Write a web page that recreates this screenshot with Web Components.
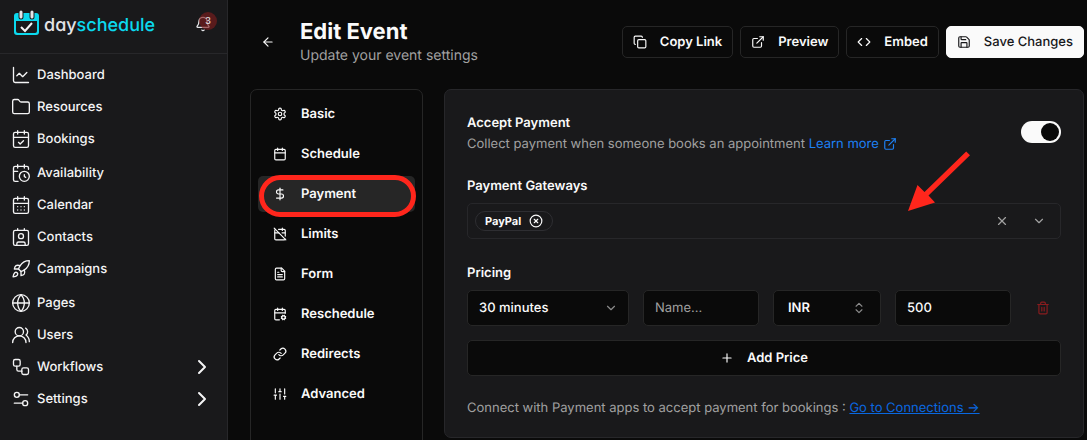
<!DOCTYPE html>
<html lang="en">
<head>
<meta charset="utf-8">
<meta name="viewport" content="width=device-width, initial-scale=1">
<title>Edit Event - dayschedule</title>
<style>
  html, body { margin: 0; height: 100%; background: #0a0a0a; }
  body { font: 500 13px/20px Inter, "Liberation Sans", sans-serif; color: #fafafa; overflow: hidden; text-rendering: geometricPrecision; }
</style>
</head>
<body>
<ds-app>
  <ds-sidebar slot="sidebar"></ds-sidebar>
  <ds-header heading="Edit Event" summary="Update your event settings">
    <ds-button icon="copy">Copy Link</ds-button>
    <ds-button icon="external">Preview</ds-button>
    <ds-button icon="code">Embed</ds-button>
    <ds-button icon="save" primary>Save Changes</ds-button>
  </ds-header>
  <ds-tabs slot="tabs">
    <ds-tab icon="gear">Basic</ds-tab>
    <ds-tab icon="calendar">Schedule</ds-tab>
    <ds-tab icon="dollar" active>Payment</ds-tab>
    <ds-tab icon="calendar-off">Limits</ds-tab>
    <ds-tab icon="file">Form</ds-tab>
    <ds-tab icon="calendar-cog">Reschedule</ds-tab>
    <ds-tab icon="link">Redirects</ds-tab>
    <ds-tab icon="sliders">Advanced</ds-tab>
  </ds-tabs>
  <ds-panel slot="panel">
    <ds-switch label="Accept Payment">Collect payment when someone books an appointment</ds-switch>
    <ds-gateways></ds-gateways>
    <ds-pricing></ds-pricing>
    <ds-note>Connect with Payment apps to accept payment for bookings :</ds-note>
  </ds-panel>
</ds-app>

<script>
const define = (name, markup, after) => {
  const template = document.createElement('template');
  template.innerHTML = markup;
  customElements.define(name, class extends HTMLElement {
    constructor() {
      super();
      this.attachShadow({ mode: 'open' }).append(template.content.cloneNode(true));
    }
    connectedCallback() { if (after) after.call(this, this.shadowRoot); }
  });
};

const p = (...d) => d.map(x => `<path d="${x}"/>`).join('');
const calendar = '<rect x="3" y="4" width="18" height="18" rx="2"/>' + p('M16 2v4M8 2v4M3 10h18');
const ICONS = {
  chart: p('M3 3v16a2 2 0 0 0 2 2h16', 'm19 9-5 5-4-4-3 3'),
  folder: p('M20 20a2 2 0 0 0 2-2V8a2 2 0 0 0-2-2h-7.9a2 2 0 0 1-1.69-.9L9.6 3.9A2 2 0 0 0 7.93 3H4a2 2 0 0 0-2 2v13a2 2 0 0 0 2 2Z'),
  calendar,
  'calendar-check': calendar + p('m9 16 2 2 4-4'),
  'calendar-clock': p('M21 7.5V6a2 2 0 0 0-2-2H5a2 2 0 0 0-2 2v14a2 2 0 0 0 2 2h3.5', 'M16 2v4M8 2v4M3 10h5', 'M16 14v2.2l1.6 1') + '<circle cx="16" cy="16" r="6"/>',
  'calendar-days': calendar + p('M8 14h.01M12 14h.01M16 14h.01M8 18h.01M12 18h.01M16 18h.01'),
  contact: '<rect x="3" y="4" width="18" height="18" rx="2"/><circle cx="12" cy="11" r="3"/>' + p('M16 2v2M8 2v2', 'M7 22v-2a2 2 0 0 1 2-2h6a2 2 0 0 1 2 2v2'),
  rocket: p('M4.5 16.5c-1.5 1.26-2 5-2 5s3.74-.5 5-2c.71-.84.7-2.13-.09-2.91a2.18 2.18 0 0 0-2.91-.09z', 'm12 15-3-3a22 22 0 0 1 2-3.95A12.88 12.88 0 0 1 22 2c0 2.72-.78 7.5-6 11a22.35 22.35 0 0 1-4 2z', 'M9 12H4s.55-3.03 2-4c1.62-1.08 5 0 5 0', 'M12 15v5s3.03-.55 4-2c1.08-1.62 0-5 0-5'),
  globe: '<circle cx="12" cy="12" r="10"/>' + p('M12 2a14.5 14.5 0 0 0 0 20 14.5 14.5 0 0 0 0-20', 'M2 12h20'),
  users: p('M18 21a8 8 0 0 0-16 0', 'M22 20c0-3.37-2-6.5-4-8a5 5 0 0 0-.45-8.3') + '<circle cx="10" cy="8" r="5"/>',
  workflow: '<rect x="3" y="3" width="8" height="8" rx="2"/><rect x="13" y="13" width="8" height="8" rx="2"/>' + p('M7 11v4a2 2 0 0 0 2 2h4'),
  settings: p('M20 7h-10M14 17H4') + '<circle cx="17" cy="17" r="3"/><circle cx="7" cy="7" r="3"/>',
  'chevron-right': p('m9 18 6-6-6-6'),
  'chevron-down': p('m6 9 6 6 6-6'),
  'chevrons': p('m7 15 5 5 5-5', 'm7 9 5-5 5 5'),
  bell: p('M10.3 21a1.94 1.94 0 0 0 3.4 0', 'M3.26 15.33A1 1 0 0 0 4 17h16a1 1 0 0 0 .74-1.67C19.41 13.96 18 12.5 18 8A6 6 0 0 0 6 8c0 4.5-1.41 5.96-2.74 7.33'),
  back: p('m12 19-7-7 7-7', 'M19 12H5'),
  gear: p('M12.22 2h-.44a2 2 0 0 0-2 2v.18a2 2 0 0 1-1 1.73l-.43.25a2 2 0 0 1-2 0l-.15-.08a2 2 0 0 0-2.73.73l-.22.38a2 2 0 0 0 .73 2.73l.15.1a2 2 0 0 1 1 1.72v.51a2 2 0 0 1-1 1.74l-.15.09a2 2 0 0 0-.73 2.73l.22.38a2 2 0 0 0 2.73.73l.15-.08a2 2 0 0 1 2 0l.43.25a2 2 0 0 1 1 1.73V20a2 2 0 0 0 2 2h.44a2 2 0 0 0 2-2v-.18a2 2 0 0 1 1-1.73l.43-.25a2 2 0 0 1 2 0l.15.08a2 2 0 0 0 2.73-.73l.22-.39a2 2 0 0 0-.73-2.73l-.15-.08a2 2 0 0 1-1-1.74v-.5a2 2 0 0 1 1-1.74l.15-.09a2 2 0 0 0 .73-2.73l-.22-.38a2 2 0 0 0-2.73-.73l-.15.08a2 2 0 0 1-2 0l-.43-.25a2 2 0 0 1-1-1.73V4a2 2 0 0 0-2-2z') + '<circle cx="12" cy="12" r="3"/>',
  dollar: p('M12 2v20', 'M17 5H9.5a3.5 3.5 0 0 0 0 7h5a3.5 3.5 0 0 1 0 7H6'),
  'calendar-off': p('M4.2 4.2A2 2 0 0 0 3 6v14a2 2 0 0 0 2 2h14a2 2 0 0 0 1.82-1.18', 'M21 15.5V6a2 2 0 0 0-2-2H9.5', 'M16 2v4M3 10h7M21 10h-5.5', 'm2 2 20 20'),
  file: p('M15 2H6a2 2 0 0 0-2 2v16a2 2 0 0 0 2 2h12a2 2 0 0 0 2-2V7Z', 'M14 2v4a2 2 0 0 0 2 2h4', 'M10 9H8M16 13H8M16 17H8'),
  'calendar-cog': p('m15.2 16.9-.9-.4M15.2 19.1l-.9.4M16 2v4M16.9 15.2l-.4-.9M16.9 20.8l-.4.9M19.5 14.3l-.4.9M19.5 21.7l-.4-.9', 'M21 10.5V6a2 2 0 0 0-2-2H5a2 2 0 0 0-2 2v14a2 2 0 0 0 2 2h6', 'm21.7 16.5-.9.4M21.7 19.5l-.9-.4M3 10h18M8 2v4') + '<circle cx="18" cy="18" r="3"/>',
  link: p('M10 13a5 5 0 0 0 7.54.54l3-3a5 5 0 0 0-7.07-7.07l-1.72 1.71', 'M14 11a5 5 0 0 0-7.54-.54l-3 3a5 5 0 0 0 7.07 7.07l1.71-1.71'),
  sliders: p('M4 21v-7M4 10V3M12 21v-9M12 8V3M20 21v-5M20 12V3M2 14h4M10 8h4M18 16h4'),
  copy: '<rect x="8" y="8" width="14" height="14" rx="2"/>' + p('M4 16c-1.1 0-2-.9-2-2V4c0-1.1.9-2 2-2h10c1.1 0 2 .9 2 2'),
  external: p('M15 3h6v6', 'M10 14 21 3', 'M18 13v6a2 2 0 0 1-2 2H5a2 2 0 0 1-2-2V8a2 2 0 0 1 2-2h6'),
  code: p('m16 18 6-6-6-6', 'm8 6-6 6 6 6'),
  save: p('M15.2 3a2 2 0 0 1 1.4.6l3.8 3.8a2 2 0 0 1 .6 1.4V19a2 2 0 0 1-2 2H5a2 2 0 0 1-2-2V5a2 2 0 0 1 2-2z', 'M17 21v-7a1 1 0 0 0-1-1H8a1 1 0 0 0-1 1v7', 'M7 3v4a1 1 0 0 0 1 1h7'),
  x: p('M18 6 6 18', 'm6 6 12 12'),
  'circle-x': '<circle cx="12" cy="12" r="10"/>' + p('m15 9-6 6', 'm9 9 6 6'),
  plus: p('M5 12h14', 'M12 5v14'),
  trash: p('M3 6h18', 'M19 6v14c0 1-1 2-2 2H7c-1 0-2-1-2-2V6', 'M8 6V4c0-1 1-2 2-2h4c1 0 2 1 2 2v2', 'M10 11v6M14 11v6')
};

define('ds-icon', `
<style>
  :host { display: block; flex: none; width: 14px; height: 14px; }
  svg { display: block; width: 100%; height: 100%; fill: none; stroke: currentColor; stroke-width: var(--stroke, 2); stroke-linecap: round; stroke-linejoin: round; overflow: visible; }
</style>
<svg viewBox="0 0 24 24" aria-hidden="true"></svg>`, function (root) {
  root.querySelector('svg').innerHTML = ICONS[this.getAttribute('name')] || '';
});

function setIcon(icon, host) {
  icon.setAttribute('name', host.getAttribute('icon'));
  icon.connectedCallback();
}

define('ds-app', `
<style>
  :host { display: grid; grid-template-columns: 228px minmax(0, 1fr); min-height: 100vh; }
  main { padding: 0 3px 0 22px; min-width: 0; }
  .body { display: grid; grid-template-columns: 173px minmax(0, 1fr); gap: 21px; align-items: start; }
</style>
<slot name="sidebar"></slot>
<main>
  <slot></slot>
  <div class="body"><slot name="tabs"></slot><slot name="panel"></slot></div>
</main>`);

define('ds-sidebar', `
<style>
  :host { display: block; background: #19191b; border-right: 1px solid #27272a; }
  header { display: flex; align-items: center; justify-content: space-between; height: 45px; padding: 0 14px 8px 13px; border-bottom: 1px solid #27272a; }
  .brand { display: flex; align-items: center; gap: 4px; color: #e4e4e7; text-decoration: none; font-size: 18px; font-feature-settings: "cv11"; }
  .brand svg { width: 27px; height: 26px; }
  .brand > span { padding-top: 6px; }
  .brand b { font-weight: 500; color: #0bd9ee; }
  .bell { position: relative; border: 0; background: none; color: #e4e4e7; padding: 0; margin: 2px 2px 0 0; }
  .bell ds-icon { width: 16px; height: 16px; }
  .count { position: absolute; left: 4px; top: -4px; width: 18px; height: 18px; border-radius: 9px; background: #7f1d1da0; font: 500 9px/18px Inter, sans-serif; text-align: center; }
  nav { display: grid; gap: 2px; padding-top: 5px; }
</style>
<header>
  <a class="brand" href="#home"><svg viewBox="0 0 27 26" aria-hidden="true">
    <rect x="1" y="3" width="25" height="22" rx="3" fill="#0bd9ee"/>
    <path d="M3 11h21v10q0 2-2 2H5q-2 0-2-2z" fill="#19191b"/>
    <path d="M8 2v5M19 2v5" stroke="#19191b" stroke-width="5" stroke-linecap="round"/>
    <path d="M8 2v5M19 2v5" stroke="#e4e4e7" stroke-width="3" stroke-linecap="round"/>
    <path d="m8 17 4 4 7-8" fill="none" stroke="#f4f4f5" stroke-width="2"/>
  </svg><span>day<b>schedule</b></span></a>
  <button class="bell" aria-label="Notifications"><ds-icon name="bell"></ds-icon><span class="count">3</span></button>
</header>
<nav aria-label="Main">
  <div>
    <ds-nav-item icon="chart">Dashboard</ds-nav-item>
    <ds-nav-item icon="folder">Resources</ds-nav-item>
    <ds-nav-item icon="calendar-check">Bookings</ds-nav-item>
  </div>
  <div>
    <ds-nav-item icon="calendar-clock">Availability</ds-nav-item>
    <ds-nav-item icon="calendar-days">Calendar</ds-nav-item>
    <ds-nav-item icon="contact">Contacts</ds-nav-item>
    <ds-nav-item icon="rocket">Campaigns</ds-nav-item>
  </div>
  <div>
    <ds-nav-item icon="globe">Pages</ds-nav-item>
    <ds-nav-item icon="users">Users</ds-nav-item>
    <ds-nav-item icon="workflow" expandable>Workflows</ds-nav-item>
    <ds-nav-item icon="settings" expandable>Settings</ds-nav-item>
  </div>
</nav>`);

define('ds-nav-item', `
<style>
  :host { display: block; }
  a { display: flex; align-items: center; gap: 6px; height: 32px; padding: 0 13px 0 11px; color: #f4f4f5; text-decoration: none; }
  .icon { width: 20px; height: 20px; --stroke: 1.6; }
  span { flex: 1; }
  .more { display: none; width: 24px; height: 24px; }
  :host([expandable]) .more { display: block; }
</style>
<a href="#"><ds-icon class="icon"></ds-icon><span><slot></slot></span><ds-icon class="more" name="chevron-right"></ds-icon></a>`, function (root) {
  setIcon(root.querySelector('.icon'), this);
});

define('ds-header', `
<style>
  :host { display: flex; align-items: center; height: 53px; padding: 15px 0 21px; }
  .back { display: flex; border: 0; background: none; color: #fafafa; padding: 0 11px; margin-right: 14px; }
  .titles { flex: 1; white-space: nowrap; }
  h1 { margin: 0; font-size: 22px; line-height: 28px; font-weight: 700; }
  p { margin: 0; font-size: 14px; line-height: 20px; font-weight: 400; color: #a1a1a1; }
  .actions { display: flex; gap: 7px; }
</style>
<button class="back" aria-label="Back"><ds-icon name="back"></ds-icon></button>
<div class="titles"><h1></h1><p></p></div>
<div class="actions"><slot></slot></div>`, function (root) {
  root.querySelector('h1').textContent = this.getAttribute('heading');
  root.querySelector('p').textContent = this.getAttribute('summary');
});

define('ds-button', `
<style>
  :host { display: block; font-weight: 600; }
  button { display: flex; align-items: center; justify-content: center; gap: 13px; box-sizing: border-box; height: 32px; width: 100%; padding: 0 10px; border: 1px solid #262626; border-radius: 5px; background: #0a0a0a; color: #fafafa; font: inherit; text-rendering: inherit; white-space: nowrap; }
  :host([primary]) button { background: #fafafa; border-color: #fafafa; color: #18181b; font-weight: 500; }
  :host([block]) button { height: 36px; }
</style>
<button type="button"><ds-icon></ds-icon><span><slot></slot></span></button>`, function (root) {
  setIcon(root.querySelector('ds-icon'), this);
});

define('ds-tabs', `
<style>
  :host { display: block; border: 1px solid #262626; border-radius: 7px; padding: 6px 7px 48px; }
  nav { display: grid; gap: 4px; }
</style>
<nav aria-label="Event settings"><slot></slot></nav>`);

define('ds-tab', `
<style>
  :host { display: block; position: relative; font-weight: 600; }
  a { display: flex; align-items: center; gap: 14px; height: 36px; padding: 0 15px; border-radius: 5px; color: #fafafa; text-decoration: none; }
  :host([active]) a { background: #262626; }
  :host([active])::after { content: ""; position: absolute; inset: -1px -1px -5px 1px; border: 5px solid #ff261c; border-radius: 21px; pointer-events: none; }
</style>
<a href="#"><ds-icon></ds-icon><slot></slot></a>`, function (root) {
  setIcon(root.querySelector('ds-icon'), this);
});

define('ds-panel', `
<style>
  :host { display: block; border: 1px solid #27272a; border-radius: 7px; padding: 23px 22px 19px; background: #19191b; }
</style>
<slot></slot>`);

define('ds-switch', `
<style>
  :host { display: flex; align-items: flex-start; justify-content: space-between; gap: 20px; margin-bottom: 22px; }
  label { display: block; margin-bottom: 1px; font-weight: 600; }
  p { margin: 0; font-weight: 400; color: #a1a1a1; }
  a { display: inline-flex; align-items: center; gap: 4px; color: #1d80f5; text-decoration: none; }
  input { appearance: none; flex: none; width: 40px; height: 22px; margin: 8px 0 0; padding: 2px; border-radius: 11px; background: #3f3f46; display: flex; }
  input::before { content: ""; width: 18px; height: 18px; border-radius: 50%; background: #0a0a0a; }
  input:checked { background: #fafafa; justify-content: flex-end; }
</style>
<div>
  <label for="toggle"></label>
  <p id="hint"><slot></slot> <a href="#learn">Learn more <ds-icon name="external"></ds-icon></a></p>
</div>
<input id="toggle" type="checkbox" role="switch" aria-describedby="hint" checked>`, function (root) {
  root.querySelector('label').textContent = this.getAttribute('label');
});

define('ds-gateways', `
<style>
  :host { display: block; margin-bottom: 24px; }
  label { display: block; margin-bottom: 7px; font-weight: 600; }
  .field { position: relative; display: flex; align-items: center; box-sizing: border-box; height: 36px; padding: 0 14px 0 7px; border: 1px solid #27272a; border-radius: 5px; }
  .chip { display: flex; align-items: center; gap: 8px; box-sizing: border-box; height: 20px; padding: 0 9px; border: 1px solid #2e2e32; border-radius: 10px; font-size: 11px; font-weight: 700; }
  button { display: flex; border: 0; padding: 0; background: none; color: inherit; }
  input { flex: 1; min-width: 0; border: 0; background: none; color: inherit; font: inherit; outline: 0; }
  .tools { display: flex; gap: 23px; color: #a1a1a1; }
  .arrow { position: absolute; right: 90px; top: -53px; width: 64px; height: 62px; pointer-events: none; }
</style>
<label for="gateway">Payment Gateways</label>
<div class="field">
  <span class="chip">PayPal<button aria-label="Remove PayPal"><ds-icon name="circle-x"></ds-icon></button></span>
  <input id="gateway" type="text">
  <span class="tools">
    <button aria-label="Clear"><ds-icon name="x"></ds-icon></button>
    <button aria-label="Open"><ds-icon name="chevron-down"></ds-icon></button>
  </span>
  <svg class="arrow" viewBox="0 0 64 62" aria-hidden="true"><path d="M2 60 11.5 34 18.5 41 60.2 .5 64 4.3 22.5 44.500 29 51.5z" fill="#ff261c"/></svg>
</div>`);

define('ds-pricing', `
<style>
  :host { display: block; margin-bottom: 22px; }
  fieldset { border: 0; margin: 0 0 14px; padding: 0; min-width: 0; }
  legend { padding: 0; margin-bottom: 7px; font-weight: 600; }
  .row { display: grid; grid-template-columns: 162fr 116fr 108fr 116fr 36px; gap: 14px; align-items: center; }
  .select { position: relative; }
  .select ds-icon { position: absolute; right: 11px; top: 11px; color: #8b8b8b; pointer-events: none; }
  .currency ds-icon { right: 15px; }
  select, input { display: block; appearance: none; box-sizing: border-box; width: 100%; height: 36px; padding: 0 11px; border: 1px solid #262626; border-radius: 5px; background: #0a0a0a; color: #fafafa; font: inherit; text-rendering: inherit; }
  .currency select { padding: 0 14px; font-weight: 600; }
  input::placeholder { color: #a1a1a1; font-weight: 400; opacity: 1; }
  .delete { display: flex; justify-content: center; border: 0; padding: 0; background: none; color: #8a1c1f; }
</style>
<fieldset>
  <legend>Pricing</legend>
  <div class="row">
    <div class="select"><select aria-label="Duration"><option>30 minutes</option></select><ds-icon name="chevron-down"></ds-icon></div>
    <input type="text" aria-label="Name" placeholder="Name...">
    <div class="select currency"><select aria-label="Currency"><option>INR</option></select><ds-icon name="chevrons"></ds-icon></div>
    <input type="text" inputmode="numeric" aria-label="Price" value="500">
    <button class="delete" aria-label="Delete price"><ds-icon name="trash"></ds-icon></button>
  </div>
</fieldset>
<ds-button icon="plus" block>Add Price</ds-button>`);

define('ds-note', `
<style>
  :host { display: block; font-weight: 400; color: #a1a1a1; }
  a { color: #0a68e0; }
</style>
<slot></slot> <a href="#connections">Go to Connections →</a>`);
</script>
</body>
</html>
